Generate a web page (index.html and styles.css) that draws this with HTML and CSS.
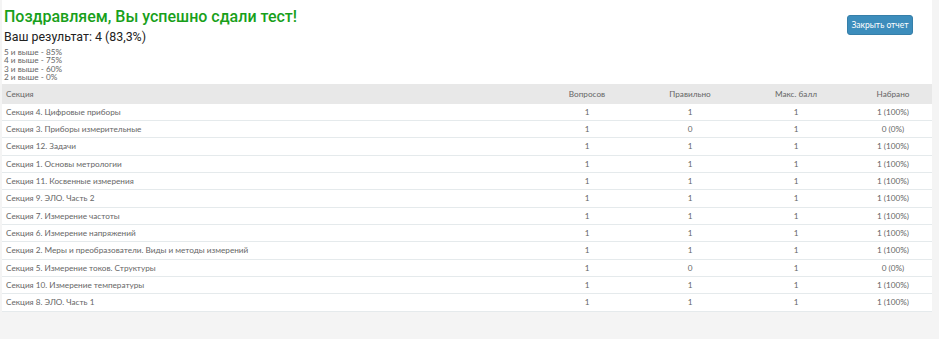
FILE: index.html
```html
<!DOCTYPE html>
<html lang="ru">
<head>
<meta charset="utf-8">
<title>Результат теста</title>
<link rel="stylesheet" href="styles.css">
</head>
<body>
<div class="card">
  <div class="head">
    <div class="head-text">
      <h1 class="title">Поздравляем, Вы успешно сдали тест!</h1>
      <div class="result">Ваш результат: 4 (83,3%)</div>
      <div class="grades">
        <div>5 и выше - 85%</div>
        <div>4 и выше - 75%</div>
        <div>3 и выше - 60%</div>
        <div>2 и выше - 0%</div>
      </div>
    </div>
    <button class="btn">Закрыть отчет</button>
  </div>
  <table class="tbl">
    <thead>
      <tr><th class="c-name">Секция</th><th class="c1">Вопросов</th><th class="c2">Правильно</th><th class="c3">Макс. балл</th><th class="c4">Набрано</th></tr>
    </thead>
    <tbody>
      <tr><td>Секция 4. Цифровые приборы</td><td>1</td><td>1</td><td>1</td><td>1 (100%)</td></tr>
      <tr><td>Секция 3. Приборы измерительные</td><td>1</td><td>0</td><td>1</td><td>0 (0%)</td></tr>
      <tr><td>Секция 12. Задачи</td><td>1</td><td>1</td><td>1</td><td>1 (100%)</td></tr>
      <tr><td>Секция 1. Основы метрологии</td><td>1</td><td>1</td><td>1</td><td>1 (100%)</td></tr>
      <tr><td>Секция 11. Косвенные измерения</td><td>1</td><td>1</td><td>1</td><td>1 (100%)</td></tr>
      <tr><td>Секция 9. ЭЛО. Часть 2</td><td>1</td><td>1</td><td>1</td><td>1 (100%)</td></tr>
      <tr><td>Секция 7. Измерение частоты</td><td>1</td><td>1</td><td>1</td><td>1 (100%)</td></tr>
      <tr><td>Секция 6. Измерение напряжений</td><td>1</td><td>1</td><td>1</td><td>1 (100%)</td></tr>
      <tr><td>Секция 2. Меры и преобразователи. Виды и методы измерений</td><td>1</td><td>1</td><td>1</td><td>1 (100%)</td></tr>
      <tr><td>Секция 5. Измерение токов. Структуры</td><td>1</td><td>0</td><td>1</td><td>0 (0%)</td></tr>
      <tr><td>Секция 10. Измерение температуры</td><td>1</td><td>1</td><td>1</td><td>1 (100%)</td></tr>
      <tr><td>Секция 8. ЭЛО. Часть 1</td><td>1</td><td>1</td><td>1</td><td>1 (100%)</td></tr>
    </tbody>
  </table>
</div>
</body>
</html>
```

FILE: styles.css
```css
html, body {
  margin: 0;
  padding: 0;
  background: #f4f4f4;
}
body {
  font-family: Lato, "Open Sans", sans-serif;
  color: #555;
}
.card {
  margin-left: 2px;
  width: 930px;
  background: #fff;
}
.head {
  display: flex;
  justify-content: space-between;
  align-items: flex-start;
  padding: 6px 19px 2px 2px;
}
.title {
  margin: 0;
  font-family: Roboto, sans-serif;
  font-weight: 500;
  font-size: 16px;
  line-height: 22px;
  color: #18a01a;
}
.result {
  font-family: Roboto, sans-serif;
  font-size: 12.4px;
  line-height: 16px;
  margin-top: 1px;
  color: #222;
}
.grades {
  margin-top: 3px;
  font-size: 8.2px;
  line-height: 8.4px;
  color: #666;
}
.btn {
  margin-top: 9px;
  background: #3c8dbc;
  border: 1px solid #367fa9;
  border-radius: 3px;
  color: #fff;
  font-family: Lato, "Open Sans", sans-serif;
  font-size: 8.5px;
  height: 20px;
  width: 66px;
  padding: 0;
}
.tbl {
  width: 100%;
  border-collapse: collapse;
  font-size: 8.2px;
  color: #666;
}
.tbl th {
  background: #e8e8e8;
  font-weight: normal;
  height: 20px;
  padding: 0 4px;
  text-align: center;
}
.tbl th.c-name { text-align: left; }
.tbl .c1 { width: 102px; }
.tbl .c2 { width: 88px; }
.tbl .c3 { width: 108px; }
.tbl .c4 { width: 70px; }
.tbl td {
  height: 16.33px;
  padding: 0 4px;
  text-align: center;
  border-bottom: 1px solid #e5eaec;
}
.tbl td:first-child { text-align: left; }
```
